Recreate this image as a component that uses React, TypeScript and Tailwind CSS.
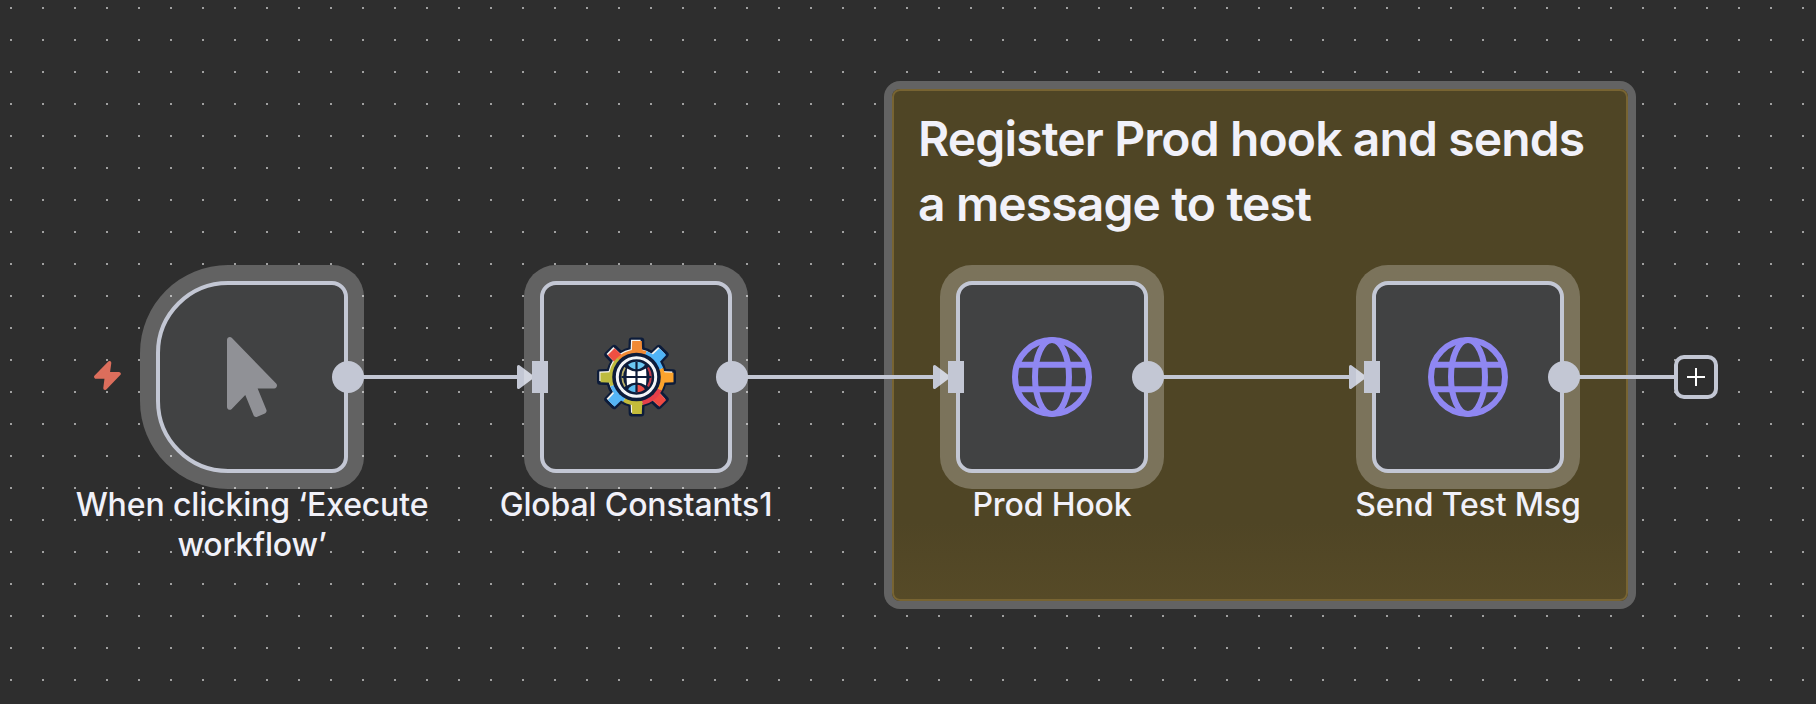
import React from "react";

type IconProps = { className?: string };

function CursorIcon({ className }: IconProps) {
  return (
    <svg viewBox="0 0 320 512" className={className} fill="currentColor">
      <path d="M302.189 329.126H196.105l55.831 135.993c3.889 9.428-.555 19.999-9.444 23.999l-49.165 21.427c-9.165 4-19.443-.571-23.332-9.714l-53.053-129.136-86.664 89.138C18.729 472.71 0 463.554 0 447.977V18.299C0 1.899 19.921-6.096 30.277 5.443l284.412 292.542c11.472 11.179 3.007 31.141-12.5 31.141z" />
    </svg>
  );
}

function GlobeIcon({ className }: IconProps) {
  return (
    <svg viewBox="0 0 40 40" className={className} fill="none" stroke="currentColor" strokeWidth="3">
      <circle cx="20" cy="20" r="18.5" />
      <ellipse cx="20" cy="20" rx="8.5" ry="18.5" />
      <path d="M3 13.9h34M3 26.1h34" />
    </svg>
  );
}

function BoltIcon({ className }: IconProps) {
  return (
    <svg viewBox="0 0 27 29" className={className} fill="currentColor" stroke="currentColor" strokeWidth="3.8" strokeLinejoin="round">
      <path d="M15.4 2 2 15.9H12.600L11.200 27 24.900 12.800H13.900Z" />
    </svg>
  );
}

const teeth = [
  { angle: 0, color: "#f18a34" },
  { angle: 45, color: "#4fb3f6" },
  { angle: 90, color: "#fba32c" },
  { angle: 135, color: "#ef4a42" },
  { angle: 180, color: "#c3bb3a" },
  { angle: 225, color: "#55b5f5" },
  { angle: 270, color: "#bdbb3e" },
  { angle: 315, color: "#ef4f42" },
];

const rim = [
  { start: 315, sweep: 65, color: "#f18a34" },
  { start: 20, sweep: 50, color: "#4fb3f6" },
  { start: 70, sweep: 48, color: "#fba32c" },
  { start: 118, sweep: 50, color: "#e5404a" },
  { start: 168, sweep: 42, color: "#c3bb3a" },
  { start: 210, sweep: 42, color: "#55b5f5" },
  { start: 252, sweep: 63, color: "#bdbb3e" },
];

const TOOTH = "M-4.800-36.500H4.800L5.200-25H-5.200Z";

function GearIcon({ className }: IconProps) {
  return (
    <svg viewBox="-40.5 -40 80 80" className={className}>
      <g fill="#0d1c3a" stroke="#0d1c3a" strokeWidth="6" strokeLinejoin="round">
        <circle r="27.500" />
        {teeth.map((t) => (
          <path key={t.angle} transform={`rotate(${t.angle})`} d={TOOTH} />
        ))}
      </g>
      <g transform="translate(-.7 -.7)" fill="#f6f4ee">
        <circle r="27.600" />
        {teeth.map((t) => (
          <path key={t.angle} transform={`rotate(${t.angle})`} d={TOOTH} />
        ))}
      </g>
      <g transform="translate(.5 .5)">
        {teeth.map((t) => (
          <path key={t.angle} transform={`rotate(${t.angle})`} d={TOOTH} fill={t.color} />
        ))}
        {rim.map((s) => (
          <circle
            key={s.start}
            r="25.500"
            fill="none"
            stroke={s.color}
            strokeWidth="5"
            pathLength={360}
            strokeDasharray={`${s.sweep} ${360 - s.sweep}`}
            transform={`rotate(${s.start - 90})`}
          />
        ))}
      </g>
      <circle r="24.300" fill="#0d1c3a" />
      <circle r="19.200" fill="none" stroke="#f3f5f7" strokeWidth="3" />
      <path d="M-8.500-12.200Q-5-15.200 0-15.200T8.500-12.200Q5-7.800 0-7.800T-8.500-12.200Z" fill="#6bc7f2" />
      <path d="M-8.500 12.200Q-5 15.200 0 15.200V7.800Q-5 7.800-8.500 12.200Z" fill="#5bbcf0" />
      <path d="M8.500 12.200Q5 15.200 0 15.200V7.800Q5 7.800 8.500 12.200Z" fill="#f0504a" />
      <path d="M-9.500-8.500Q-5-5.600 0-5.600T9.500-8.500Q10.500 0 9.500 8.500Q5 5.600 0 5.600T-9.500 8.500Q-10.500 0-9.500-8.500Z" fill="#fff" />
      <path d="M-11.500-9.500Q-17 0-11.500 9.500" fill="none" stroke="#b9b06a" strokeWidth="1.800" />
      <path d="M11.500-9.500Q17 0 11.500 9.500" fill="none" stroke="#c23b49" strokeWidth="2.200" />
      <path d="M0-15V15M-15 0H15" fill="none" stroke="#0d1c3a" strokeWidth="2.200" />
    </svg>
  );
}

type NodeProps = {
  label: string;
  icon: React.ReactNode;
  trigger?: boolean;
};

function WorkflowNode({ label, icon, trigger }: NodeProps) {
  return (
    <div className="relative z-10 flex w-48 shrink-0 flex-col items-center">
      <div
        className={`flex size-48 shrink-0 items-center justify-center border-4 border-[#c3c7d4] bg-[#414243] shadow-[0_0_0_16px_rgba(255,255,255,0.25)] ${
          trigger ? "rounded-l-[72px] rounded-r-2xl" : "rounded-2xl"
        }`}
      >
        {icon}
      </div>
      {!trigger && <span className="absolute -left-2 top-20 h-8 w-4 bg-[#c3c7d4]" />}
      <span className="absolute -right-4 top-20 size-8 rounded-full bg-[#c3c7d4]" />
      <div className="mt-3 w-96 shrink-0 text-center text-[32px] leading-10 font-medium tracking-[-0.14px]">{label}</div>
    </div>
  );
}

function Edge({ width }: { width: string }) {
  return (
    <div className={`flex h-48 shrink-0 items-center pr-1.5 ${width}`}>
      <span className="h-1 grow bg-[#c3c7d4]" />
      <svg viewBox="0 0 17 24" className="h-6 w-[17px] shrink-0">
        <path d="M1.500 1.500 15.500 12 1.500 22.500Z" fill="#c3c7d4" stroke="#c3c7d4" strokeWidth="3" strokeLinejoin="round" />
      </svg>
    </div>
  );
}

export default function App() {
  return (
    <main className="relative h-[704px] w-[1816px] overflow-hidden bg-[#2e2e2e] font-['Inter',sans-serif] text-[#f1f1f9]">
      <svg className="absolute inset-0 size-full">
        <defs>
          <pattern id="dots" x="10" y="7" width="32" height="32" patternUnits="userSpaceOnUse">
            <rect width="2" height="2" fill="#a0a0a0" />
          </pattern>
        </defs>
        <rect width="100%" height="100%" fill="url(#dots)" />
      </svg>

      <section className="absolute left-[892px] top-[89px] h-[512px] w-[736px] rounded-lg border-2 border-[#786432] bg-linear-to-b from-[#4f4525] from-85% to-[#564a27] px-6 py-[15px] shadow-[0_0_0_8px_#636363]">
        <h2 className="text-[48px] leading-[65px] font-semibold tracking-[-0.88px] whitespace-nowrap">
          Register Prod hook and sends
          <br />a message to test
        </h2>
      </section>

      <div className="relative flex items-start pt-[281px] pl-[94px]">
        <div className="flex h-48 w-[62px] shrink-0 items-center pb-1">
          <BoltIcon className="h-[29px] w-[27px] text-[#dc6e5c]" />
        </div>
        <WorkflowNode trigger label="When clicking ‘Execute workflow’" icon={<CursorIcon className="h-20 w-[50px] text-[#909196]" />} />
        <Edge width="w-48" />
        <WorkflowNode label="Global Constants1" icon={<GearIcon className="size-20" />} />
        <Edge width="w-56" />
        <WorkflowNode label="Prod Hook" icon={<GlobeIcon className="size-20 text-[#8f87f2]" />} />
        <Edge width="w-56" />
        <WorkflowNode label="Send Test Msg" icon={<GlobeIcon className="size-20 text-[#8f87f2]" />} />
        <div className="flex h-48 shrink-0 items-center">
          <span className="h-1 w-[110px] bg-[#c3c7d4]" />
          <button aria-label="Add node" className="flex size-11 items-center justify-center rounded-[10px] border-4 border-[#c3c7d4] bg-[#2e2e2e]">
            <svg viewBox="0 0 18 18" className="size-[18px]">
              <path d="M9 0v18M0 9h18" stroke="#fff" strokeWidth="2" />
            </svg>
          </button>
        </div>
      </div>
    </main>
  );
}
